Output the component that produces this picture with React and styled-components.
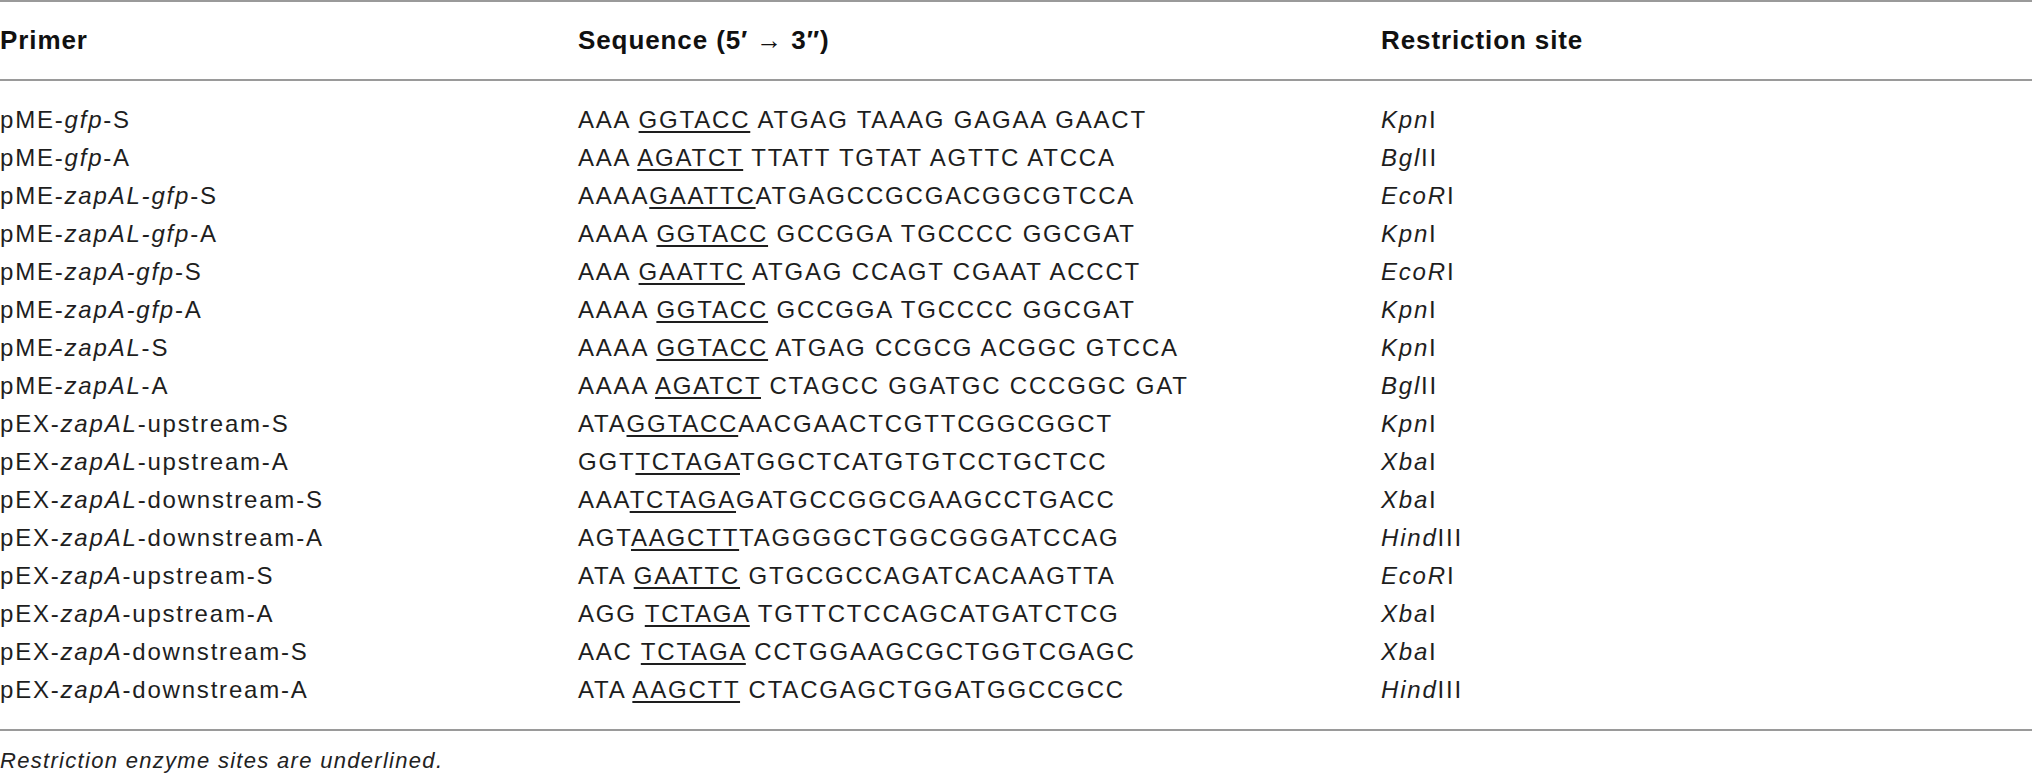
import React from "react";
import styled, { createGlobalStyle } from "styled-components";

const Global = createGlobalStyle`
  html, body { margin: 0; padding: 0; background: #ffffff; }
  body { font-family: "Liberation Sans", Arial, sans-serif; color: #1e1e1e; }
`;

const Wrap = styled.div`
  width: 2032px;
`;

const Table = styled.div`
  border-top: 2px solid #9a9a9a;
  border-bottom: 2px solid #9a9a9a;
`;

const Grid = styled.div`
  display: grid;
  grid-template-columns: 578px 803px 1fr;
  align-items: center;
`;

const HeadRow = styled(Grid)`
  height: 77px;
  border-bottom: 2px solid #9a9a9a;
`;

const HeadCell = styled.div`
  font-weight: 700;
  font-size: 26px;
  letter-spacing: 0.9px;
  color: #111;
`;

const Body = styled.div`
  padding: 20px 0 20px;
`;

const Row = styled(Grid)`
  height: 38px;
`;

const Cell = styled.div`
  font-size: 24px;
  letter-spacing: 1.8px;
  white-space: nowrap;
  color: #1e1e1e;
`;

const Site = styled.span`
  text-decoration: underline;
  text-decoration-thickness: 1.5px;
  text-underline-offset: 3px;
`;

const Note = styled.div`
  padding-top: 16px;
  font-size: 22px;
  line-height: 28px;
  letter-spacing: 1.3px;
  font-style: italic;
  color: #222;
`;

const rows = [
  [<>pME-<i>gfp</i>-S</>, ["AAA ", "GGTACC", " ATGAG TAAAG GAGAA GAACT"], ["Kpn", "I"]],
  [<>pME-<i>gfp</i>-A</>, ["AAA ", "AGATCT", " TTATT TGTAT AGTTC ATCCA"], ["Bgl", "II"]],
  [<>pME-<i>zapAL-gfp</i>-S</>, ["AAAA", "GAATTC", "ATGAGCCGCGACGGCGTCCA"], ["EcoR", "I"]],
  [<>pME-<i>zapAL-gfp</i>-A</>, ["AAAA ", "GGTACC", " GCCGGA TGCCCC GGCGAT"], ["Kpn", "I"]],
  [<>pME-<i>zapA-gfp</i>-S</>, ["AAA ", "GAATTC", " ATGAG CCAGT CGAAT ACCCT"], ["EcoR", "I"]],
  [<>pME-<i>zapA-gfp</i>-A</>, ["AAAA ", "GGTACC", " GCCGGA TGCCCC GGCGAT"], ["Kpn", "I"]],
  [<>pME-<i>zapAL</i>-S</>, ["AAAA ", "GGTACC", " ATGAG CCGCG ACGGC GTCCA"], ["Kpn", "I"]],
  [<>pME-<i>zapAL</i>-A</>, ["AAAA ", "AGATCT", " CTAGCC GGATGC CCCGGC GAT"], ["Bgl", "II"]],
  [<>pEX-<i>zapAL</i>-upstream-S</>, ["ATA", "GGTACC", "AACGAACTCGTTCGGCGGCT"], ["Kpn", "I"]],
  [<>pEX-<i>zapAL</i>-upstream-A</>, ["GGT", "TCTAGA", "TGGCTCATGTGTCCTGCTCC"], ["Xba", "I"]],
  [<>pEX-<i>zapAL</i>-downstream-S</>, ["AAA", "TCTAGA", "GATGCCGGCGAAGCCTGACC"], ["Xba", "I"]],
  [<>pEX-<i>zapAL</i>-downstream-A</>, ["AGT", "AAGCTT", "TAGGGGCTGGCGGGATCCAG"], ["Hind", "III"]],
  [<>pEX-<i>zapA</i>-upstream-S</>, ["ATA ", "GAATTC", " GTGCGCCAGATCACAAGTTA"], ["EcoR", "I"]],
  [<>pEX-<i>zapA</i>-upstream-A</>, ["AGG ", "TCTAGA", " TGTTCTCCAGCATGATCTCG"], ["Xba", "I"]],
  [<>pEX-<i>zapA</i>-downstream-S</>, ["AAC ", "TCTAGA", " CCTGGAAGCGCTGGTCGAGC"], ["Xba", "I"]],
  [<>pEX-<i>zapA</i>-downstream-A</>, ["ATA ", "AAGCTT", " CTACGAGCTGGATGGCCGCC"], ["Hind", "III"]],
];

export default function App() {
  return (
    <Wrap>
      <Global />
      <Table>
        <HeadRow>
          <HeadCell>Primer</HeadCell>
          <HeadCell>Sequence (5′ → 3″)</HeadCell>
          <HeadCell>Restriction site</HeadCell>
        </HeadRow>
        <Body>
          {rows.map(([name, seq, site], i) => (
            <Row key={i}>
              <Cell>{name}</Cell>
              <Cell>
                {seq[0]}
                <Site>{seq[1]}</Site>
                {seq[2]}
              </Cell>
              <Cell>
                <i>{site[0]}</i>
                {site[1]}
              </Cell>
            </Row>
          ))}
        </Body>
      </Table>
      <Note>Restriction enzyme sites are underlined.</Note>
    </Wrap>
  );
}
